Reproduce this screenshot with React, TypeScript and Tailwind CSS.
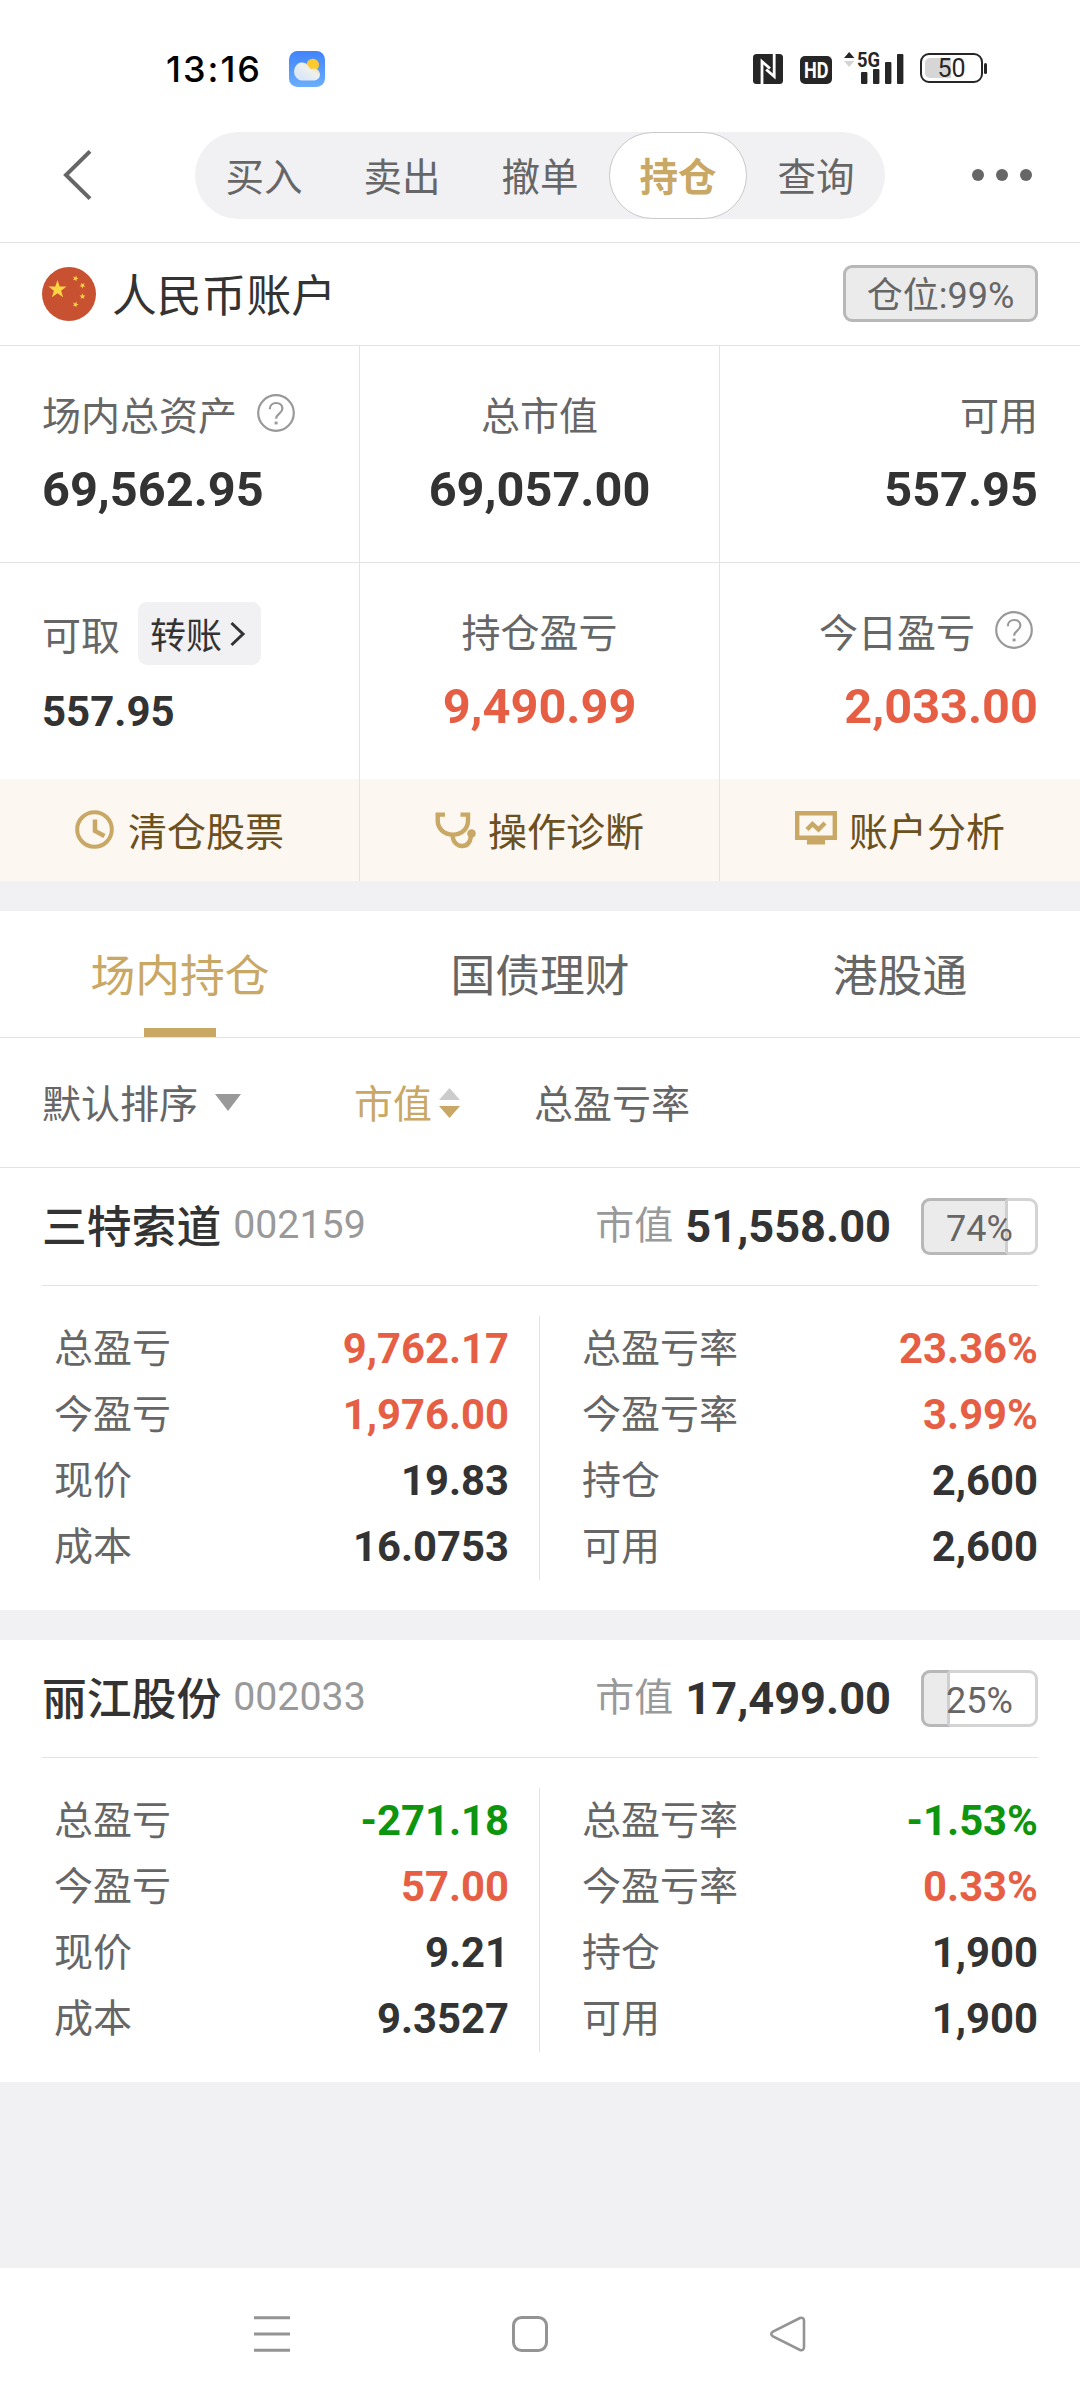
import React from 'react';

const GOLD = '#c9a765';

interface Holding {
  name: string;
  code: string;
  marketValue: string;
  percent: number;
  left: [string, string, string?][];
  right: [string, string, string?][];
}

const UP = 'text-[#e65f45]';
const DOWN = 'text-[#0d960d]';

const holdings: Holding[] = [
  {
    name: '三特索道',
    code: '002159',
    marketValue: '51,558.00',
    percent: 74,
    left: [
      ['总盈亏', '9,762.17', UP],
      ['今盈亏', '1,976.00', UP],
      ['现价', '19.83'],
      ['成本', '16.0753'],
    ],
    right: [
      ['总盈亏率', '23.36%', UP],
      ['今盈亏率', '3.99%', UP],
      ['持仓', '2,600'],
      ['可用', '2,600'],
    ],
  },
  {
    name: '丽江股份',
    code: '002033',
    marketValue: '17,499.00',
    percent: 25,
    left: [
      ['总盈亏', '-271.18', DOWN],
      ['今盈亏', '57.00', UP],
      ['现价', '9.21'],
      ['成本', '9.3527'],
    ],
    right: [
      ['总盈亏率', '-1.53%', DOWN],
      ['今盈亏率', '0.33%', UP],
      ['持仓', '1,900'],
      ['可用', '1,900'],
    ],
  },
];

const WeatherIcon = () => (
  <svg width="36" height="36" viewBox="0 0 36 36">
    <defs>
      <linearGradient id="sky" x1="0" y1="0" x2="0" y2="1">
        <stop offset="0" stopColor="#4183fa" />
        <stop offset="1" stopColor="#6aaefb" />
      </linearGradient>
      <linearGradient id="cloud" x1="1" y1="0.1" x2="0.3" y2="0.8">
        <stop offset="0" stopColor="#fbd96a" />
        <stop offset="0.5" stopColor="#eef0ec" />
        <stop offset="1" stopColor="#dce8f8" />
      </linearGradient>
    </defs>
    <rect width="36" height="36" rx="8.5" fill="url(#sky)" />
    <circle cx="23.8" cy="14" r="6.2" fill="#fcc92f" />
    <path d="M13 29.5a8 9 0 1 1 6.8-13.8 8 8 0 0 1 2.2 2.6 6 6 0 1 1 2.4 11.2z" fill="url(#cloud)" />
  </svg>
);

const NfcIcon = () => (
  <svg width="30" height="30" viewBox="0 0 30 30">
    <rect width="30" height="30" rx="3.5" fill="#262626" />
    <path d="M9 30V7.5l8 7M21.2 0v22.5l-8-7" fill="none" stroke="#fff" strokeWidth="2.8" />
  </svg>
);

const HdIcon = () => (
  <svg className="overflow-visible" width="32" height="28" viewBox="0 0 32 28">
    <rect width="32" height="28" rx="5" fill="#262626" />
    <text x="4" y="22" fontSize="22" fontWeight="700" fill="#fff" textLength="24.5" lengthAdjust="spacingAndGlyphs">HD</text>
  </svg>
);

const SignalIcon = () => (
  <svg className="overflow-visible" width="60" height="34" viewBox="0 0 60 34">
    <path d="M0 8l5.2-6 5.2 6z" fill="#262626" />
    <path d="M0 11l5.2 6 5.2-6z" fill="#d4d4d4" />
    <text x="13" y="17" fontSize="21" fontWeight="700" fill="#262626" textLength="23" lengthAdjust="spacingAndGlyphs">5G</text>
    <rect x="17" y="22" width="6.4" height="12" rx="1" fill="#262626" />
    <rect x="29" y="19" width="6.4" height="15" rx="1" fill="#262626" />
    <rect x="41" y="12" width="6.4" height="22" rx="1" fill="#262626" />
    <rect x="53" y="4" width="6.4" height="30" rx="1" fill="#262626" />
  </svg>
);

const STAR = 'M0-10L2.35-3.24 9.51-3.09 3.8 1.24 5.88 8.09 0 4 -5.88 8.09-3.8 1.24-9.51-3.09-2.35-3.24z';

const FlagIcon = () => (
  <svg width="54" height="54" viewBox="0 0 54 54">
    <circle cx="27" cy="27" r="27" fill="#c85132" />
    <g fill="#fcd444">
      <path d={STAR} transform="translate(15.5 22.5) scale(.95)" />
      <path d={STAR} transform="translate(33.5 11.5) rotate(20) scale(.32)" />
      <path d={STAR} transform="translate(40.5 18.5) rotate(40) scale(.32)" />
      <path d={STAR} transform="translate(40.5 29.5) scale(.32)" />
      <path d={STAR} transform="translate(33.5 37.5) rotate(20) scale(.32)" />
    </g>
  </svg>
);

const HelpIcon = () => (
  <svg width="38" height="38" viewBox="0 0 38 38" fill="none" stroke="#999" strokeWidth="2.2">
    <circle cx="19" cy="19" r="17.8" />
    <path d="M12.8 15.2c0-3.8 2.6-6.2 6.4-6.2 3.6 0 6.2 2.3 6.2 5.6 0 5-6.3 5.2-6.3 10.2" />
    <path d="M17.6 29h3" strokeWidth="2.8" />
  </svg>
);

const ClockIcon = () => (
  <svg width="39" height="39" viewBox="0 0 39 39" fill="none" stroke={GOLD} strokeWidth="4">
    <circle cx="19.5" cy="19.5" r="17.3" />
    <path d="M20 9.5v11.5l9.5 5" strokeWidth="4.5" />
  </svg>
);

const StethoscopeIcon = () => (
  <svg width="41" height="37" viewBox="0 0 41 37" fill="none" stroke={GOLD} strokeWidth="4.4">
    <path d="M10 2.6H2.7v6c0 8 6.3 14 15.2 14s15.1-6 15.1-14v-6h-7.5" />
    <path d="M17.5 23c.5 7 4.5 11 9.500 11 5.500 0 8.500-4 9-11" />
    <circle cx="36.5" cy="21.5" r="4.3" fill={GOLD} stroke="none" />
  </svg>
);

const MonitorIcon = () => (
  <svg width="42" height="34" viewBox="0 0 42 34" fill="none" stroke={GOLD} strokeWidth="4.4">
    <path d="M2.2 2.2h37.6v24.6H2.2z" />
    <path d="M12 28h18v5.5H12z" fill={GOLD} stroke="none" />
    <path d="M12 18.5l5.5-5.5 6 5.5 6.5-6.5" />
  </svg>
);

const StatusBar = () => (
  <div className="h-[110px] shrink-0 flex items-start pl-[166px] pr-[93px]">
    <span className="mt-[45px] w-[123px] font-['Inter'] font-medium text-[36px] leading-[48px] tracking-[2px] text-black">13:16</span>
    <div className="mt-[51px]"><WeatherIcon /></div>
    <div className="ml-auto mt-[50px] h-[34px] flex items-end">
      <NfcIcon />
      <div className="ml-[17px]"><HdIcon /></div>
      <div className="ml-3"><SignalIcon /></div>
      <div className="ml-4 mb-[1px] relative w-[63px] h-[30px] rounded-[9px] border-[2.5px] border-[#262626] flex items-center justify-center">
        <div className="absolute left-[3px] top-[3px] bottom-[3px] w-[26px] rounded-l-[5px] bg-[#d6d6d6]" />
        <span className="relative text-[25px] leading-none text-[#262626]">50</span>
      </div>
      <div className="ml-[1px] mb-[10px] w-[3px] h-[11px] rounded-full bg-[#262626]" />
    </div>
  </div>
);

const NavBar = () => (
  <div className="h-[133px] shrink-0 flex items-start border-b border-[#e3e3e5] pl-[63px] pr-[48px] pt-[22px]">
    <svg className="mt-[18px]" width="30" height="50" viewBox="0 0 30 50" fill="none" stroke="#666" strokeWidth="4">
      <path d="M27 1.4L3 25l24 23.6" />
    </svg>
    <div className="ml-[102px] flex h-[87px] rounded-full bg-[#f1f1f4]">
      {['买入', '卖出', '撤单', '持仓', '查询'].map((item) => (
        <div
          key={item}
          className={`w-[138px] h-full flex items-center justify-center text-[38.5px] pt-[4px] ${
            item === '持仓' ? 'rounded-full bg-white border border-[#c8c8c8] font-bold text-[#c9a765]' : 'text-[#666]'
          }`}
        >
          {item}
        </div>
      ))}
    </div>
    <div className="ml-auto mt-[37px] flex gap-3">
      <i className="size-3 rounded-full bg-[#666]" />
      <i className="size-3 rounded-full bg-[#666]" />
      <i className="size-3 rounded-full bg-[#666]" />
    </div>
  </div>
);

const PercentBadge: React.FC<{ percent: number }> = ({ percent }) => (
  <div className="relative w-[117px] h-[57px] rounded-[9px] border-[3px] border-[#d4d4d4] flex items-center justify-center">
    <div
      className="absolute -left-[3px] -top-[3px] h-[57px] rounded-l-[9px] border-[3px] border-[#b8b8b8] border-r-[#cfcfcf] bg-[#ebebeb]"
      style={{ width: (117 * percent) / 100 }}
    />
    <span className="relative text-[36px] leading-none text-[#666] pt-[5px]">{percent}%</span>
  </div>
);

const AccountRow = () => (
  <div className="h-[103px] shrink-0 flex items-center px-[42px] border-b border-[#e3e3e5]">
    <FlagIcon />
    <span className="ml-[16px] pt-[7px] text-[44.8px] leading-none text-[#333]">人民币账户</span>
    <div className="ml-auto mb-[2px] w-[195px] h-[57px] rounded-[9px] border-[3px] border-[#b8b8b8] bg-[#ebebeb] flex items-center justify-center pt-[6px] text-[36px] leading-none text-[#666]">
      仓位:99%
    </div>
  </div>
);

interface CellProps {
  label: string;
  value: string;
  align?: string;
  help?: boolean;
  color?: string;
}

const Cell: React.FC<CellProps> = ({ label, value, align = 'items-start', help, color = 'text-[#333]' }) => (
  <div className={`flex flex-col px-[42px] pt-[42px] ${align}`}>
    <div className="flex items-center h-[58px] text-[39px] leading-[58px] text-[#666]">
      {label}
      {help && <span className="ml-5 mr-[5px] -mt-[8px]"><HelpIcon /></span>}
    </div>
    <div className={`mt-[16px] text-[48.7px] leading-[56px] font-bold ${color}`}>{value}</div>
  </div>
);

const Summary = () => (
  <div className="shrink-0">
    <div className="grid grid-cols-3 h-[217px] divide-x divide-[#e3e3e5] border-b border-[#e3e3e5]">
      <Cell label="场内总资产" value="69,562.95" help />
      <Cell label="总市值" value="69,057.00" align="items-center" />
      <Cell label="可用" value="557.95" align="items-end" />
    </div>
    <div className="grid grid-cols-3 h-[216px] divide-x divide-[#e3e3e5]">
      <div className="px-[42px] pt-[39px]">
        <div className="flex items-center h-[63px]">
          <span className="pt-[7px] text-[39px] leading-none text-[#666]">可取</span>
          <span className="ml-[18px] w-[123px] h-[63px] rounded-[9px] bg-[#f1f1f4] flex items-center pl-3 pt-[7px] text-[36px] leading-none text-[#333]">
            转账
            <svg className="ml-[7px] -mt-[7px]" width="17" height="26" viewBox="0 0 17 26" fill="none" stroke="#333" strokeWidth="3">
              <path d="M2.5 2l11.5 11L2.5 24" />
            </svg>
          </span>
        </div>
        <div className="mt-[23px] text-[42px] leading-[48px] font-bold text-[#333]">557.95</div>
      </div>
      <Cell label="持仓盈亏" value="9,490.99" align="items-center" color={UP} />
      <Cell label="今日盈亏" value="2,033.00" align="items-end" color={UP} help />
    </div>
    <div className="grid grid-cols-3 h-[102px] divide-x divide-[#e3e3e5] bg-[#fcf7f0] text-[39px] leading-none text-[#6b5020]">
      <div className="flex items-center justify-center gap-[14px] pt-[6px]">
        <span className="-mt-[8px]"><ClockIcon /></span>清仓股票
      </div>
      <div className="flex items-center justify-center gap-[12px] pt-[6px]">
        <span className="-mt-[6px]"><StethoscopeIcon /></span>操作诊断
      </div>
      <div className="flex items-center justify-center gap-[12px] pt-[6px]">
        <span className="-mt-[11px]"><MonitorIcon /></span>账户分析
      </div>
    </div>
  </div>
);

const Tabs = () => (
  <div className="grid grid-cols-3 h-[127px] shrink-0 bg-white border-b border-[#e3e3e5] text-[44.8px] leading-none">
    {['场内持仓', '国债理财', '港股通'].map((tab, i) => (
      <div key={tab} className={`flex flex-col items-center justify-between pt-[44px] ${i === 0 ? 'text-[#c9a765]' : 'text-[#666]'}`}>
        {tab}
        {i === 0 && <div className="w-[72px] h-[9px] bg-[#c9a765]" />}
      </div>
    ))}
  </div>
);

const SortBar = () => (
  <div className="h-[130px] shrink-0 flex items-center bg-white border-b border-[#e3e3e5] px-[42px] pt-[5px] text-[39px] leading-none text-[#666]">
    <span>默认排序</span>
    <svg className="ml-[17px] -mt-[5px]" width="26" height="17" viewBox="0 0 26 17"><path d="M0 0h26L13 17z" fill="#999" /></svg>
    <span className="ml-[113px] text-[#c9a765]">市值</span>
    <svg className="ml-[7px] -mt-[5px]" width="21" height="30" viewBox="0 0 21 30">
      <path d="M0 12L10.5 0 21 12z" fill="#ccc" />
      <path d="M0 18h21L10.5 30z" fill={GOLD} />
    </svg>
    <span className="ml-[74px]">总盈亏率</span>
  </div>
);

const Column: React.FC<{ rows: Holding['left'] }> = ({ rows }) => (
  <>
    {rows.map(([label, value, color]) => (
      <div key={label} className="flex h-[66px] items-center justify-between">
        <span className="text-[39px] leading-none text-[#666]">{label}</span>
        <span className={`text-[41.8px] leading-none font-bold ${color ?? 'text-[#333]'}`}>{value}</span>
      </div>
    ))}
  </>
);

const HoldingCard: React.FC<{ holding: Holding }> = ({ holding }) => (
  <div className="h-[442px] shrink-0 bg-white px-[42px]">
    <div className="flex items-center h-[118px] border-b border-[#e3e3e5]">
      <span className="pt-[3px] text-[44.8px] leading-none font-medium text-[#333]">{holding.name}</span>
      <span className="ml-[12px] text-[39.3px] leading-none text-[#999] -mt-[2px]">{holding.code}</span>
      <span className="ml-auto text-[39px] leading-none text-[#999]">市值</span>
      <span className="ml-[12px] mr-[30px] text-[45.2px] leading-none font-bold text-[#333]">{holding.marketValue}</span>
      <PercentBadge percent={holding.percent} />
    </div>
    <div className="flex mt-[30px]">
      <div className="w-[498px] pl-[12px] pr-[30px] border-r border-[#e3e3e5]">
        <Column rows={holding.left} />
      </div>
      <div className="flex-1 pl-[42px]">
        <Column rows={holding.right} />
      </div>
    </div>
  </div>
);

const SystemNav = () => (
  <div className="h-[132px] shrink-0 bg-white flex pt-12 pl-[254px]">
    <svg width="552" height="36" viewBox="0 0 552 36" fill="none" stroke="#949494" strokeWidth="3">
      <path d="M0 1.8h36M0 18h36M0 34.2h36" />
      <rect x="259.5" y="1.5" width="33" height="33" rx="8" />
      <path d="M546 2l-27 13.5q-3.5 2.5 0 5L546 34q4 1 4-3V5q0-4-4-3z" strokeWidth="2.6" />
    </svg>
  </div>
);

export default function App() {
  return (
    <div className="w-[1080px] h-[2400px] flex flex-col bg-[#f1f1f4] overflow-hidden font-['Roboto','Noto_Sans_CJK_SC',sans-serif]">
      <div className="bg-white shrink-0">
        <StatusBar />
        <NavBar />
        <AccountRow />
        <Summary />
      </div>
      <div className="mt-[30px] shrink-0">
        <Tabs />
        <SortBar />
      </div>
      <div className="flex flex-col gap-[30px]">
        {holdings.map((h) => (
          <HoldingCard key={h.code} holding={h} />
        ))}
      </div>
      <div className="mt-auto">
        <SystemNav />
      </div>
    </div>
  );
}
